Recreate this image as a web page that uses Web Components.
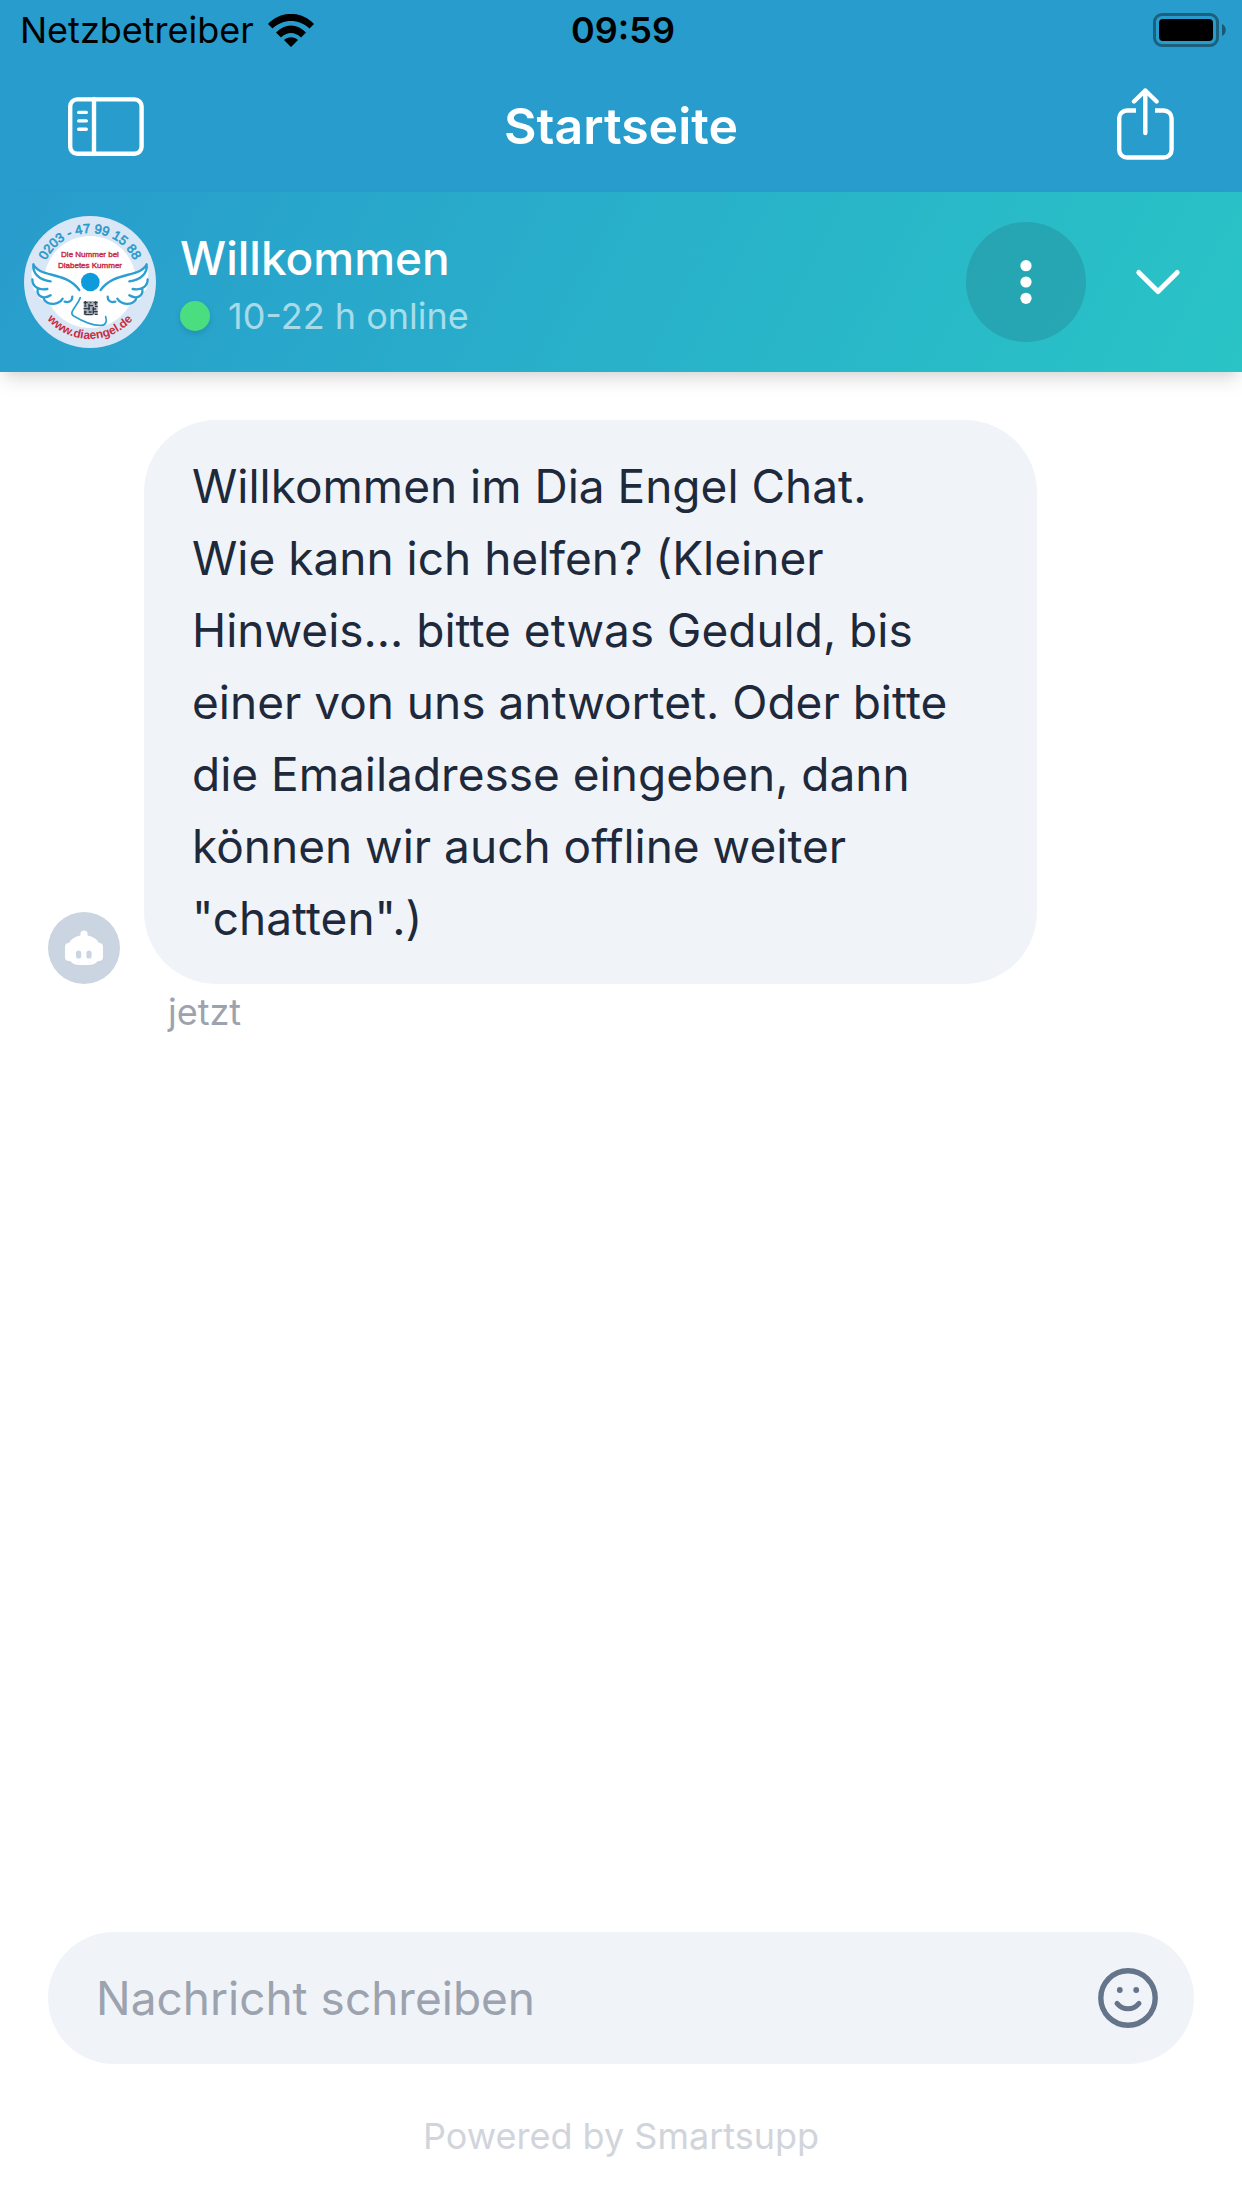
<!DOCTYPE html>
<html lang="de">
<head>
<meta charset="utf-8">
<meta name="viewport" content="width=device-width, initial-scale=1">
<title>Startseite</title>
<style>
  body {
    background-color: #ffffff;
    color: #1e293b;
    font-family: Inter, 'Liberation Sans', sans-serif;
    font-size: 46px;
    margin: 0;
  }
</style>
</head>
<body>

<chat-screen>
  <status-bar slot="top" carrier="Netzbetreiber" time="09:59"></status-bar>
  <nav-bar slot="top">Startseite</nav-bar>
  <chat-header slot="top">
    <engel-logo slot="avatar"></engel-logo>
    Willkommen
    <span slot="status">10-22 h online</span>
  </chat-header>
  <chat-message time="jetzt">Willkommen im Dia Engel Chat.<br>Wie kann ich helfen? (Kleiner Hinweis... bitte etwas Geduld, bis einer von uns antwortet. Oder bitte die Emailadresse eingeben, dann können wir auch offline weiter "chatten".)</chat-message>
  <chat-composer slot="bottom" placeholder="Nachricht schreiben"></chat-composer>
  <powered-by slot="bottom" href="#smartsupp">Powered by Smartsupp</powered-by>
</chat-screen>

<script>
class ChatElement extends HTMLElement {
  constructor( markup ) {
    super();

    const template = document.createElement( 'template' );
    template.innerHTML = markup;

    // Root
    this.attachShadow( {mode: 'open'} );
    this.shadowRoot.appendChild( template.content.cloneNode( true ) );
  }
}

// Page frame
// Bars on top, conversation in the middle, composer at the bottom
class ChatScreen extends ChatElement {
  constructor() {
    super( /* template */ `
      <style>
        :host {
          display: flex;
          flex-direction: column;
          min-height: 100vh;
        }

        header {
          display: flex;
          flex-direction: column;
        }

        main {
          display: flex;
          flex-direction: column;
          flex-grow: 1;
          gap: 24px;
          padding: 48px;
        }
      </style>
      <header><slot name="top"></slot></header>
      <main><slot></slot></main>
      <footer><slot name="bottom"></slot></footer>
    ` );
  }
}

class StatusBar extends ChatElement {
  constructor() {
    super( /* template */ `
      <style>
        :host {
          align-items: center;
          background-color: #289ccc;
          box-sizing: border-box;
          color: #000000;
          display: grid;
          font-size: 36px;
          grid-template-columns: 1fr auto 1fr;
          height: 60px;
          line-height: 48px;
          padding: 0 16px 0 20px;
        }

        div {
          align-items: center;
          display: flex;
          gap: 14px;
        }

        time {
          font-weight: 600;
        }

        svg {
          display: block;
        }

        .battery {
          justify-self: end;
        }
      </style>
      <div>
        <span></span>
        <svg width="46" height="33" viewBox="0 0 46 33" aria-hidden="true">
          <path d="M0 10C13 -3.5 33 -3.5 46 10L41.5 14.5C31 4.5 15 4.5 4.5 14.5ZM8 18.5C17 9 29 9 38 18.5L33 23.5C27 17.5 19 17.5 13 23.5ZM16 26C20 22.2 26 22.2 30 26L23 33Z"/>
        </svg>
      </div>
      <time></time>
      <svg class="battery" width="73" height="34" viewBox="0 0 73 34" aria-hidden="true">
        <rect x="1.5" y="1.5" width="63" height="31" rx="7.5" fill="none" stroke="#1b607d" stroke-width="3"/>
        <rect x="6" y="6" width="54" height="22" rx="4"/>
        <path d="M69 11C74 13 74 21 69 23Z" fill="#1b5873"/>
      </svg>
    ` );
  }

  connectedCallback() {
    this.shadowRoot.querySelector( 'span' ).textContent = this.getAttribute( 'carrier' );
    this.shadowRoot.querySelector( 'time' ).textContent = this.getAttribute( 'time' );
  }
}

class NavBar extends ChatElement {
  constructor() {
    super( /* template */ `
      <style>
        :host {
          align-items: center;
          background-color: #289ccc;
          box-sizing: border-box;
          color: #ffffff;
          display: grid;
          grid-template-columns: 1fr auto 1fr;
          height: 132px;
          padding: 0 68px;
        }

        h1 {
          font-size: 50px;
          font-weight: 600;
          line-height: 60px;
          margin: 0;
        }

        button {
          background: none;
          border: none;
          color: inherit;
          cursor: pointer;
          justify-self: start;
          margin: 0;
          padding: 0;
        }

        button:last-of-type {
          justify-self: end;
        }

        svg {
          display: block;
          fill: none;
          stroke: currentColor;
          stroke-linecap: round;
          stroke-linejoin: round;
        }
      </style>
      <button type="button" aria-label="Seitenleiste">
        <svg width="76" height="76" viewBox="0 0 76 76">
          <rect x="2.2" y="11.4" width="71.4" height="54.4" rx="7" stroke-width="4.4"/>
          <path d="M26 11V66" stroke-width="4.4"/>
          <path d="M10.7 24.4H18.3M10.7 32.9H18.3M10.7 41.2H18.3" stroke-width="3.4"/>
        </svg>
      </button>
      <h1><slot></slot></h1>
      <button type="button" aria-label="Teilen">
        <svg width="57" height="76" viewBox="0 0 57 76" stroke-width="4.4">
          <path d="M19 22.5H10A7.8 7.8 0 0 0 2.2 30.3V61.7A7.8 7.8 0 0 0 10 69.5H46.8A7.8 7.8 0 0 0 54.6 61.7V30.3A7.8 7.8 0 0 0 46.8 22.5H38" stroke-linecap="butt"/>
          <path d="M28.3 45V2.5M17 13.500L28.3 2.5L39.6 13.500"/>
        </svg>
      </button>
    ` );
  }
}

class ChatHeader extends ChatElement {
  constructor() {
    super( /* template */ `
      <style>
        :host {
          align-items: center;
          background-image: linear-gradient( 118deg, #289ccd, #29c4c6 );
          box-shadow: 0 12px 18px -3px rgba( 0, 0, 0, 0.1 ), 0 6px 12px -6px rgba( 0, 0, 0, 0.1 );
          box-sizing: border-box;
          color: #ffffff;
          display: flex;
          gap: 24px;
          height: 180px;
          padding: 0 24px;
        }

        .title {
          flex-grow: 1;
          min-width: 0;
        }

        h2 {
          font-size: 46px;
          font-weight: 500;
          line-height: 68px;
          margin: 0;
        }

        p {
          align-items: center;
          color: rgba( 255, 255, 255, 0.6 );
          display: flex;
          font-size: 36px;
          gap: 18px;
          line-height: 48px;
          margin: 0;
        }

        p::before {
          background-color: #4ade80;
          border-radius: 50%;
          box-shadow: 0 3px 6px rgba( 0, 0, 0, 0.12 );
          content: '';
          height: 30px;
          width: 30px;
        }

        .actions {
          display: flex;
          gap: 12px;
        }

        button {
          align-items: center;
          background: none;
          border: none;
          border-radius: 50%;
          color: inherit;
          cursor: pointer;
          display: flex;
          height: 120px;
          justify-content: center;
          padding: 0;
          width: 120px;
        }

        .menu {
          background-color: rgba( 30, 41, 59, 0.15 );
        }
      </style>
      <slot name="avatar"></slot>
      <div class="title">
        <h2><slot></slot></h2>
        <p><slot name="status"></slot></p>
      </div>
      <div class="actions">
        <button class="menu" type="button" aria-label="Optionen">
          <svg width="48" height="48" viewBox="0 0 48 48" fill="currentColor">
            <circle cx="24" cy="7.7" r="5.6"/>
            <circle cx="24" cy="24" r="5.6"/>
            <circle cx="24" cy="40.3" r="5.6"/>
          </svg>
        </button>
        <button type="button" aria-label="Chat minimieren">
          <svg width="48" height="48" viewBox="0 0 48 48" fill="none" stroke="currentColor" stroke-width="5" stroke-linecap="round" stroke-linejoin="round">
            <path d="M4.8 14.5L24 33.5L43.2 14.5"/>
          </svg>
        </button>
      </div>
    ` );
  }
}

// Round logo with winged figure and lettering along the rim
class EngelLogo extends ChatElement {
  constructor() {
    super( /* template */ `
      <style>
        :host {
          display: block;
          flex-shrink: 0;
          height: 132px;
          width: 132px;
        }

        svg {
          display: block;
        }

        text {
          font-family: 'Liberation Sans', sans-serif;
          text-anchor: middle;
        }
      </style>
      <svg width="132" height="132" viewBox="0 0 132 132" role="img" aria-label="Dia Engel">
        <defs>
          <path id="upper" d="M17 66A49 49 0 0 1 115 66"/>
          <path id="lower" d="M9 66A57 57 0 0 0 123 66"/>
        </defs>
        <circle cx="66" cy="66" r="66" fill="#d8e6f6"/>
        <circle cx="66" cy="66" r="46" fill="#ffffff"/>
        <g transform="translate(-14 -16) scale(.3333)" stroke="#2b9fd1" stroke-width="7" stroke-linecap="round" stroke-linejoin="round">
          <g id="wing">
            <path d="M70 193C90 235 165 212 205 268L185 290C188 305 178 313 165 308C145 320 115 320 106 302C90 303 82 290 84 277C68 273 65 255 69 240C60 222 68 205 70 193Z" fill="#ffffff" stroke="none"/>
            <path d="M70 193C90 235 165 212 208 270M70 193C67 219 87 240 122 244M67 238C67 260 86 272 112 267M83 268C80 289 101 299 122 286M102 298C115 318 146 315 158 296M164 305C179 309 187 302 187 290" fill="none"/>
          </g>
          <use href="#wing" transform="translate(480 0) scale(-1 1)"/>
          <path d="M211 293C201 320 174 338 191 348C216 363 250 378 275 376C289 375 291 362 287 350" fill="none" stroke-width="5"/>
          <circle cx="241" cy="246" r="28" fill="#0d9bdc" stroke="none"/>
          <rect x="221" y="303" width="42" height="42" fill="#aab0b8" stroke="none"/>
          <path d="M221 308H233M239 308H244M251 308H263M223 318H229M235 317H249M255 319H263M221 326H240M247 327H258M222 336H230M236 336H245M251 335H263M226 344H248M255 343H263M226 303V314M257 304V315M237 311V331M225 332V344M250 321V341" fill="none" stroke="#303947" stroke-width="4" stroke-linecap="butt"/>
        </g>
        <g font-size="13" fill="#2899cc" stroke="#2899cc" stroke-width=".6">
          <text><textPath href="#upper" startOffset="50%">0203 - 47 99 15 88</textPath></text>
        </g>
        <g fill="#c92d43">
          <text x="66" y="41" font-size="8" stroke="#c92d43" stroke-width=".4">Die Nummer bei</text>
          <text x="66" y="52" font-size="8" stroke="#c92d43" stroke-width=".4">Diabetes Kummer</text>
          <text font-size="12" font-weight="700"><textPath href="#lower" startOffset="50%">www.diaengel.de</textPath></text>
        </g>
      </svg>
    ` );
  }
}

class ChatMessage extends ChatElement {
  constructor() {
    super( /* template */ `
      <style>
        :host {
          display: grid;
          gap: 4px 24px;
          grid-template-columns: 72px 1fr;
        }

        .bot {
          align-self: end;
          display: block;
        }

        .bubble {
          background-color: #f0f4f9;
          border-radius: 72px;
          box-sizing: border-box;
          justify-self: start;
          line-height: 72px;
          margin: 0;
          max-width: 85%;
          padding: 30px 48px;
        }

        time {
          color: #9ca3af;
          font-size: 36px;
          grid-column: 2;
          line-height: 48px;
          padding: 0 24px;
        }
      </style>
      <svg class="bot" width="72" height="72" viewBox="0 0 72 72" role="img" aria-label="Bot">
        <circle cx="36" cy="36" r="36" fill="#cbd5e1"/>
        <path d="M32.4 23.5V22A3.6 3.6 0 0 1 39.6 22V23.5C45 24.5 49 27 51 31C54 31 55 32.5 55 35V45C55 48 53.5 49 50 49C47 52 44 53 41 53H31C28 53 25 52 22 49C18.5 49 17 48 17 45V35C17 32.5 18 31 21 31C23 27 27 24.5 32.4 23.5Z" fill="#ffffff"/>
        <rect x="28" y="38.5" width="5.2" height="8" rx="2.6" fill="#cbd5e1"/>
        <rect x="38.4" y="38.5" width="5.2" height="8" rx="2.6" fill="#cbd5e1"/>
      </svg>
      <p class="bubble"><slot></slot></p>
      <time></time>
    ` );
  }

  connectedCallback() {
    this.shadowRoot.querySelector( 'time' ).textContent = this.getAttribute( 'time' );
  }
}

class ChatComposer extends ChatElement {
  constructor() {
    super( /* template */ `
      <style>
        :host {
          display: block;
          padding: 0 48px;
        }

        form {
          align-items: center;
          background-color: #f0f4f9;
          border-radius: 66px;
          box-sizing: border-box;
          display: flex;
          gap: 24px;
          height: 132px;
          padding: 0 36px 0 48px;
        }

        input {
          background: none;
          border: none;
          color: inherit;
          flex-grow: 1;
          font: inherit;
          height: 72px;
          min-width: 0;
          outline: none;
          padding: 0;
        }

        input::placeholder {
          color: #9ca3af;
          opacity: 1.0;
        }

        button {
          background: none;
          border: none;
          color: #64748b;
          cursor: pointer;
          padding: 0;
        }

        svg {
          display: block;
        }
      </style>
      <form>
        <input type="text">
        <button type="button" aria-label="Emoji">
          <svg width="60" height="60" viewBox="0 0 60 60" fill="none" stroke="currentColor" stroke-linecap="round">
            <circle cx="30" cy="30" r="27.2" stroke-width="5.4"/>
            <path d="M19 35.3C25 42.5 35 42.5 41 35.3" stroke-width="5"/>
            <circle cx="21.8" cy="22" r="2.9" fill="currentColor" stroke="none"/>
            <circle cx="38.2" cy="22" r="2.9" fill="currentColor" stroke="none"/>
          </svg>
        </button>
      </form>
    ` );

    // Elements
    this.$input = this.shadowRoot.querySelector( 'input' );
    this.shadowRoot.querySelector( 'form' ).addEventListener( 'submit', ( evt ) => evt.preventDefault() );
  }

  connectedCallback() {
    this.$input.placeholder = this.getAttribute( 'placeholder' );
    this.$input.setAttribute( 'aria-label', this.getAttribute( 'placeholder' ) );
  }
}

class PoweredBy extends ChatElement {
  constructor() {
    super( /* template */ `
      <style>
        :host {
          display: block;
          font-size: 36px;
          line-height: 48px;
          padding: 48px;
          text-align: center;
        }

        a {
          color: #d1d5db;
          text-decoration: none;
        }
      </style>
      <a><slot></slot></a>
    ` );
  }

  connectedCallback() {
    this.shadowRoot.querySelector( 'a' ).href = this.getAttribute( 'href' );
  }
}

window.customElements.define( 'chat-screen', ChatScreen );
window.customElements.define( 'status-bar', StatusBar );
window.customElements.define( 'nav-bar', NavBar );
window.customElements.define( 'chat-header', ChatHeader );
window.customElements.define( 'engel-logo', EngelLogo );
window.customElements.define( 'chat-message', ChatMessage );
window.customElements.define( 'chat-composer', ChatComposer );
window.customElements.define( 'powered-by', PoweredBy );
</script>
</body>
</html>
